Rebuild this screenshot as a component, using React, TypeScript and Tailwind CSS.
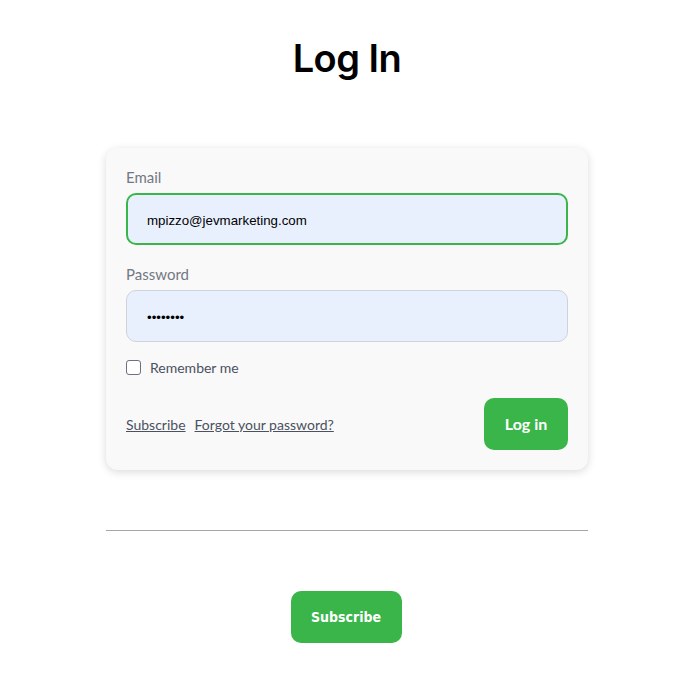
import { useState } from "react";

export default function App() {
	const [remember, setRemember] = useState(false);

	return (
		<div className="min-h-screen bg-white font-['Lato',sans-serif]">
			<div className="mx-auto flex w-[484px] flex-col items-center pt-[30px] pl-[2px]">
				<h1 className="font-['Inter',sans-serif] text-[38px] font-semibold tracking-[-0.5px] text-black leading-[56px]">
					Log In
				</h1>

				<form className="mt-[62px] w-full rounded-xl bg-[#f9f9f9] px-5 pt-[19px] pb-5 shadow-[0_2px_8px_rgba(0,0,0,0.15)]">
					<label className="block text-[15px] leading-[20px] text-[#727884]">
						Email
					</label>
					<input
						type="email"
						defaultValue="mpizzo@jevmarketing.com"
						className="mt-[6px] block h-[52px] w-full rounded-[10px] border-2 border-[#3ab54a] bg-[#e8f0fe] px-[19px] pt-[3px] font-['Liberation_Sans',sans-serif] text-[13.3px] text-black outline-none"
					/>

					<label className="mt-[19px] block text-[15px] leading-[20px] text-[#727884]">
						Password
					</label>
					<input
						type="password"
						defaultValue="password"
						className="mt-[6px] block h-[52px] w-full rounded-[10px] border border-[#cfd3d9] bg-[#e8f0fe] px-[20px] pt-[3px] font-['Liberation_Sans',sans-serif] text-[13.3px] text-black outline-none"
					/>

					<label className="mt-[15px] flex items-center gap-[9px] text-[14px] text-[#4b5160]">
						<input
							type="checkbox"
							checked={remember}
							onChange={(e) => setRemember(e.target.checked)}
							className="h-[15px] w-[15px] appearance-none rounded-[3px] border border-[#6b7280] bg-white"
						/>
						Remember me
					</label>

					<div className="mt-[20px] flex items-center justify-between">
						<div className="flex gap-[9px] text-[14px] text-[#4b5160]">
							<a href="#" className="underline">
								Subscribe
							</a>
							<a href="#" className="underline">
								Forgot your password?
							</a>
						</div>
						<button
							type="button"
							className="h-[52px] w-[84px] rounded-[10px] bg-[#3ab54a] text-[16px] font-bold text-white"
						>
							Log in
						</button>
					</div>
				</form>

				<hr className="mt-[60px] w-full border-t border-[#a6a6a6]" />

				<button
					type="button"
					className="mt-[60px] -ml-[2px] h-[52px] w-[111px] rounded-[10px] bg-[#3ab54a] font-['DejaVu_Sans_Condensed','DejaVu_Sans',sans-serif] font-stretch-condensed text-[14px] font-bold text-white"
				>
					Subscribe
				</button>
			</div>
		</div>
	);
}
